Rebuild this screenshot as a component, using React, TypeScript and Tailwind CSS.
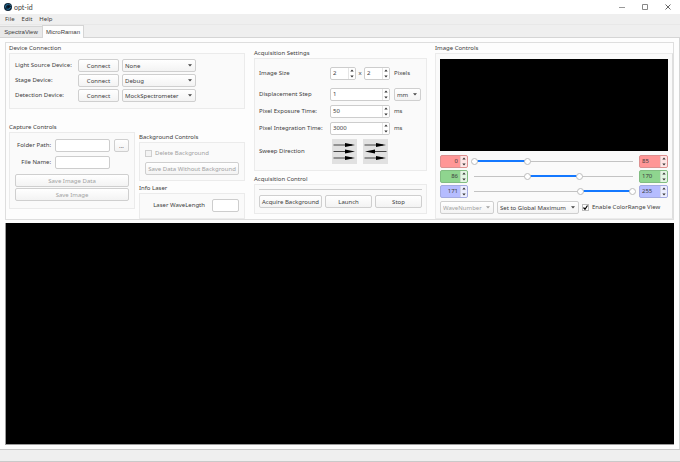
import React, { useState } from "react";
import clsx from "clsx";

const BUTTON =
  "h-[13px] rounded-[2px] border border-[#cfcfcf] bg-linear-to-b from-white to-[#f3f3f3] text-center leading-[10px] whitespace-nowrap disabled:text-[#a2a2a2]";
const FIELD = "h-[13px] min-w-0 rounded-[2px] border border-[#cdcdcd] bg-white px-[2px] leading-[10px] outline-none";

/** Titled frame used for every block of settings */
function Group({ title, className, children }: { title: string; className?: string; children: React.ReactNode }) {
  return (
    <fieldset className="min-w-0">
      <legend className="h-[10px] leading-[11px]">{title}</legend>
      <div className={clsx("border border-[#ebebeb] bg-[#fafafa]", className)}>{children}</div>
    </fieldset>
  );
}

interface DropdownProps {
  label: string;
  options: string[];
  disabled?: boolean;
  className?: string;
}

function Dropdown({ label, options, disabled, className }: DropdownProps) {
  return (
    <div className={clsx("relative", className)}>
      <select
        aria-label={label}
        disabled={disabled}
        className={clsx(BUTTON, "block w-full appearance-none pr-2 pl-[2px] text-left disabled:opacity-100")}
      >
        {options.map((option) => (
          <option key={option}>{option}</option>
        ))}
      </select>
      <svg
        viewBox="0 0 4 3"
        className={clsx(
          "pointer-events-none absolute top-[5px] right-[4px] h-[3px] w-[4px]",
          disabled ? "fill-[#a2a2a2]" : "fill-[#444]",
        )}
      >
        <path d="M0 0.3H4L2 2.5Z" />
      </svg>
    </div>
  );
}

interface SpinProps {
  label: string;
  value: number;
  onChange: (value: number) => void;
  id?: string;
  className?: string;
  inputClassName?: string;
}

function Spin({ label, value, onChange, id, className, inputClassName }: SpinProps) {
  return (
    <div className={clsx("flex h-[13px] overflow-hidden rounded-[2px] border", className)}>
      <input
        id={id}
        aria-label={label}
        inputMode="numeric"
        value={value}
        onChange={(e) => onChange(Number(e.target.value) || 0)}
        className={clsx("w-0 min-w-0 flex-1 px-[2px] leading-[11px] outline-none", inputClassName)}
      />
      <div className="flex w-[7px] shrink-0 flex-col border-l border-black/10 bg-white/75">
        <button aria-label={`Increase ${label}`} onClick={() => onChange(value + 1)} className="flex flex-1 items-center justify-center">
          <svg viewBox="0 0 4 3" className="h-[3px] w-[4px] fill-[#333]">
            <path d="M0.3 2.6H3.7L2 0.5Z" />
          </svg>
        </button>
        <button aria-label={`Decrease ${label}`} onClick={() => onChange(value - 1)} className="flex flex-1 items-center justify-center">
          <svg viewBox="0 0 4 3" className="h-[3px] w-[4px] fill-[#333]">
            <path d="M0.3 0.4H3.7L2 2.5Z" />
          </svg>
        </button>
      </div>
    </div>
  );
}

const THUMB =
  "pointer-events-none absolute inset-0 h-full w-full appearance-none bg-transparent outline-none [&::-webkit-slider-thumb]:pointer-events-auto [&::-webkit-slider-thumb]:size-[7px] [&::-webkit-slider-thumb]:appearance-none [&::-webkit-slider-thumb]:rounded-full [&::-webkit-slider-thumb]:border [&::-webkit-slider-thumb]:border-[#bcbcbc] [&::-webkit-slider-thumb]:bg-white";

/** One colour channel: low spin box, two-handled slider, high spin box */
function ChannelRange({ name, start, end, tint }: { name: string; start: number; end: number; tint: string }) {
  const [low, setLow] = useState(start);
  const [high, setHigh] = useState(end);

  return (
    <div className="flex items-center gap-[3px]">
      <Spin label={`${name} low`} value={low} onChange={setLow} className={clsx("w-[28px]", tint)} inputClassName="text-right" />
      <div className="relative h-[9px] flex-1">
        <div className="absolute inset-x-[3px] top-[4px] h-px bg-[#c3c3c3]">
          <div
            className="absolute -top-px h-[2px] bg-[#1478ff]"
            style={{ left: `${(low / 255) * 100}%`, right: `${100 - (high / 255) * 100}%` }}
          />
        </div>
        <input type="range" aria-label={`${name} lower bound`} max={255} value={low} onChange={(e) => setLow(+e.target.value)} className={THUMB} />
        <input type="range" aria-label={`${name} upper bound`} max={255} value={high} onChange={(e) => setHigh(+e.target.value)} className={THUMB} />
      </div>
      <Spin label={`${name} high`} value={high} onChange={setHigh} className={clsx("w-[29px]", tint)} />
    </div>
  );
}

/** Three scan lines; the middle one runs backwards in the serpentine mode */
function SweepIcon({ serpentine }: { serpentine?: boolean }) {
  return (
    <svg viewBox="0 0 25 25" className="size-full fill-black stroke-black">
      {[6, 12.5, 19].map((y, i) => (
        <g key={y} transform={serpentine && i === 1 ? "translate(25 0) scale(-1 1)" : undefined}>
          <path d={`M1.5 ${y}H20`} strokeWidth="0.7" />
          <path d={`M13 ${y - 2}L23 ${y}L13 ${y + 2}Z`} stroke="none" />
        </g>
      ))}
    </svg>
  );
}

function TitleBar() {
  return (
    <header className="flex h-[14px] items-center bg-white pl-[4px]">
      <svg viewBox="0 0 16 16" className="size-[8px]">
        <circle cx="8" cy="8" r="8" fill="#10263a" />
        <path d="M3 9A5 5 0 0 1 9 3M5 12A5.5 5.5 0 0 0 13 8" fill="none" stroke="#2580ad" strokeWidth="1.8" />
        <circle cx="9" cy="7.5" r="2.2" fill="#06101b" />
        <path d="M11 2.5L14 5.5" stroke="#5aa5c8" strokeWidth="1.3" />
      </svg>
      <h1 className="ml-[2px] flex-1 font-[Lato,sans-serif] text-[7px] leading-[12px]">opt-id</h1>
      <button aria-label="Minimize" className="flex h-full w-[23px] items-center justify-center">
        <svg viewBox="0 0 6 6" className="size-[6px] stroke-[#999]">
          <path d="M0 3.5H6" />
        </svg>
      </button>
      <button aria-label="Maximize" className="flex h-full w-[23px] items-center justify-center">
        <svg viewBox="0 0 6 6" className="size-[6px] fill-none stroke-[#888]">
          <path d="M0.5 0.5H5.5V5.5H0.5Z" />
        </svg>
      </button>
      <button aria-label="Close" className="flex h-full w-[24px] items-center justify-center">
        <svg viewBox="0 0 6 6" className="size-[6px] stroke-[#666]">
          <path d="M0.5 0.5L5.5 5.5M5.5 0.5L0.5 5.5" />
        </svg>
      </button>
    </header>
  );
}

const DEVICES = [
  { label: "Light Source Device:", options: ["None"] },
  { label: "Stage Device:", options: ["Debug"] },
  { label: "Detection Device:", options: ["MockSpectrometer"] },
];

function DeviceConnection() {
  return (
    <Group title="Device Connection" className="flex flex-col gap-[2px] px-[5px] pt-[5px] pb-[6px]">
      {DEVICES.map((device) => (
        <div key={device.label} className="flex items-center">
          <span className="w-[63px] whitespace-nowrap">{device.label}</span>
          <button className={clsx(BUTTON, "w-[41px]")}>Connect</button>
          <Dropdown label={device.label} options={device.options} className="ml-[3px] w-[74px]" />
        </div>
      ))}
    </Group>
  );
}

function CaptureControls() {
  return (
    <Group title="Capture Controls" className="flex flex-col px-[5px] pt-[6px] pb-[7px]">
      <div className="flex items-center">
        <label htmlFor="folder" className="w-[36px] text-right whitespace-nowrap">Folder Path:</label>
        <input id="folder" className={clsx(FIELD, "ml-[4px] w-0 flex-1")} />
        <button aria-label="Browse folder" className={clsx(BUTTON, "ml-[4px] w-[15px]")}>...</button>
      </div>
      <div className="mt-[4px] flex items-center pr-[19px]">
        <label htmlFor="file" className="w-[36px] text-right whitespace-nowrap">File Name:</label>
        <input id="file" className={clsx(FIELD, "ml-[4px] w-0 flex-1")} />
      </div>
      <button disabled className={clsx(BUTTON, "mt-[5px]")}>Save Image Data</button>
      <button disabled className={clsx(BUTTON, "mt-px")}>Save Image</button>
    </Group>
  );
}

function BackgroundControls() {
  return (
    <Group title="Background Controls" className="flex flex-col gap-[4px] px-[5px] pt-[6px] pb-[5px]">
      <label className="flex items-center gap-[3px] text-[#a2a2a2]">
        <input type="checkbox" disabled className="size-[7px] appearance-none border border-[#cfcfcf] bg-[#f3f3f3]" />
        Delete Background
      </label>
      <button disabled className={BUTTON}>Save Data Without Background</button>
    </Group>
  );
}

function InfoLaser() {
  return (
    <Group title="Info Laser" className="flex items-center justify-end gap-[7px] px-[5px] pt-[5px] pb-[6px]">
      <label htmlFor="wavelength">Laser WaveLength</label>
      <input id="wavelength" className={clsx(FIELD, "w-[27px]")} />
    </Group>
  );
}

function AcquisitionSettings() {
  const [columns, setColumns] = useState(2);
  const [rows, setRows] = useState(2);
  const [step, setStep] = useState(1);
  const [exposure, setExposure] = useState(50);
  const [integration, setIntegration] = useState(3000);
  const box = "border-[#cdcdcd] bg-white";

  return (
    <Group
      title="Acquisition Settings"
      className="grid grid-cols-[67px_60px_1fr] items-center gap-x-[4px] gap-y-[4px] px-[4px] pt-[8px] pb-[6px]"
    >
      <label htmlFor="size">Image Size</label>
      <div className="flex items-center justify-between">
        <Spin id="size" label="Image columns" value={columns} onChange={setColumns} className={clsx("w-[26px]", box)} />
        <span>x</span>
        <Spin label="Image rows" value={rows} onChange={setRows} className={clsx("w-[26px]", box)} />
      </div>
      <span>Pixels</span>

      <label htmlFor="step" className="mt-[4px]">Displacement Step</label>
      <Spin id="step" label="Displacement Step" value={step} onChange={setStep} className={clsx("mt-[4px]", box)} />
      <Dropdown label="Step unit" options={["mm"]} className="mt-[4px] w-[27px]" />

      <label htmlFor="exposure" className="whitespace-nowrap">Pixel Exposure Time:</label>
      <Spin id="exposure" label="Pixel Exposure Time" value={exposure} onChange={setExposure} className={box} />
      <span>ms</span>

      <label htmlFor="integration" className="whitespace-nowrap">Pixel Integration Time:</label>
      <Spin id="integration" label="Pixel Integration Time" value={integration} onChange={setIntegration} className={box} />
      <span>ms</span>

      <span>Sweep Direction</span>
      <div className="flex gap-[6px] pl-[2px]">
        <button aria-label="Sweep one way" className="size-[25px] bg-[#e1e1e1]">
          <SweepIcon />
        </button>
        <button aria-label="Sweep back and forth" className="size-[25px] bg-[#e1e1e1]">
          <SweepIcon serpentine />
        </button>
      </div>
    </Group>
  );
}

function AcquisitionControl() {
  return (
    <Group title="Acquisition Control" className="px-[4px] pt-[4px] pb-[5px]">
      <hr className="border-[#cdcdcd]" />
      <div className="mt-[5px] grid grid-cols-[63fr_47fr_47fr] gap-[3px]">
        <button className={BUTTON}>Acquire Background</button>
        <button className={BUTTON}>Launch</button>
        <button className={BUTTON}>Stop</button>
      </div>
    </Group>
  );
}

function ImageControls() {
  const [colorRange, setColorRange] = useState(true);

  return (
    <Group title="Image Controls" className="flex flex-col gap-[2px] border-r-[#dedede] px-[4px] pt-[5px] pb-[4px]">
      <div className="mb-[2px] h-[92px] bg-black" />
      <ChannelRange name="Red" start={0} end={85} tint="border-[#dc9090] bg-[#ff9696]" />
      <ChannelRange name="Green" start={86} end={170} tint="border-[#81bd81] bg-[#8fd58f]" />
      <ChannelRange name="Blue" start={171} end={255} tint="border-[#a3aae0] bg-[#b5bcff]" />
      <div className="mt-px flex items-center gap-[3px]">
        <Dropdown label="Axis unit" options={["WaveNumber"]} disabled className="w-[54px]" />
        <Dropdown label="Scaling" options={["Set to Global Maximum"]} className="w-[82px]" />
        <label className="flex items-center gap-[3px] whitespace-nowrap">
          <span className="relative flex size-[7px]">
            <input
              type="checkbox"
              checked={colorRange}
              onChange={(e) => setColorRange(e.target.checked)}
              className="size-[7px] appearance-none border border-[#bdbdbd] bg-white"
            />
            {colorRange && (
              <svg viewBox="0 0 7 7" className="pointer-events-none absolute inset-0 size-[7px] fill-none stroke-black">
                <path d="M1.5 3.5L3 5.3L5.5 1.5" strokeWidth="1.2" />
              </svg>
            )}
          </span>
          Enable ColorRange View
        </label>
      </div>
    </Group>
  );
}

export default function App() {
  return (
    <div className="flex min-h-screen flex-col bg-[#fdfdfd] font-['Noto_Sans',sans-serif] text-[6px] leading-[9px] text-[#3c3c3c]">
      <TitleBar />

      <nav className="flex h-[11px] items-center gap-[7px] border-b border-[#e8e8e8] bg-[#efefef] pl-[5px]">
        <button>File</button>
        <button>Edit</button>
        <button>Help</button>
      </nav>

      <div role="tablist" className="flex h-[13px] items-end border-b border-[#d5d5d5] bg-[#efefef] font-['Liberation_Sans',sans-serif]">
        <button role="tab" aria-selected="false" className="h-[11px] w-[42px] border-t border-[#d5d5d5] bg-[#e9e9e9]">
          SpectraView
        </button>
        <button role="tab" aria-selected="true" className="-mb-px h-[13px] w-[42px] border border-b-0 border-[#d5d5d5] bg-[#fdfdfd]">
          MicroRaman
        </button>
      </div>

      <main className="flex flex-1 flex-col gap-[3px] border-r border-[#d5d5d5] px-[5px] pt-[4px] pb-[4px]">
        <section className="grid grid-cols-[236fr_174fr_238fr] gap-x-[8px] border border-[#dedede] pl-[3px]">
          <div>
            <DeviceConnection />
            <div className="mt-[13px] grid grid-cols-[minmax(0,126fr)_minmax(0,106fr)] gap-[4px]">
              <CaptureControls />
              <div className="mt-[10px] flex flex-col gap-[2px]">
                <BackgroundControls />
                <InfoLaser />
              </div>
            </div>
          </div>
          <div className="flex flex-col gap-[3px] pt-[5px] pl-px">
            <AcquisitionSettings />
            <AcquisitionControl />
          </div>
          <ImageControls />
        </section>
        <div className="flex-1 border-b border-l border-[#9a9a9a] bg-black" />
      </main>

      <footer className="h-[13px] border-y border-[#c9c9c9] bg-[#efefef]" />
    </div>
  );
}
